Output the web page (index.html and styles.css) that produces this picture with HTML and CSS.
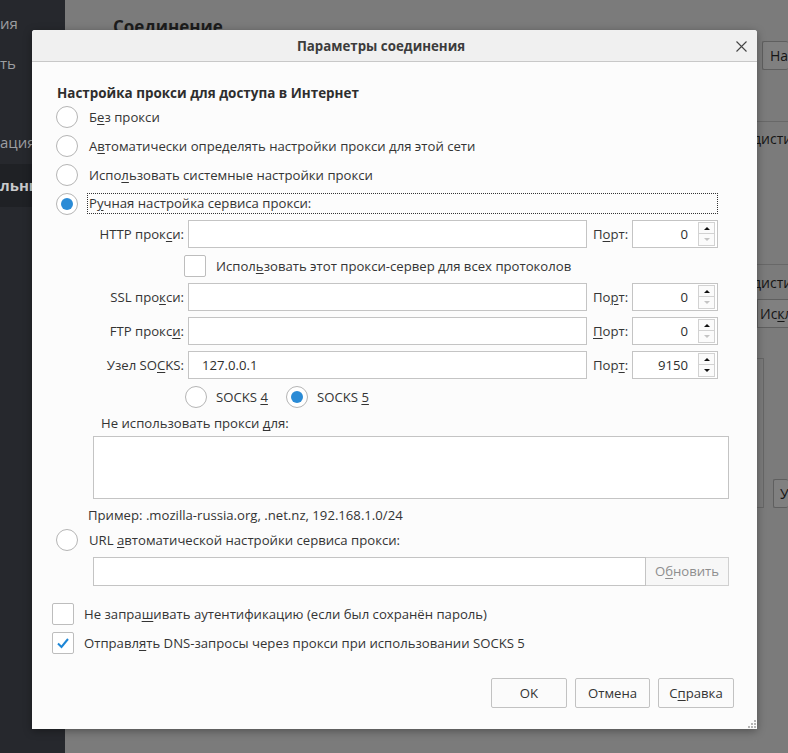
FILE: index.html
```html
<!DOCTYPE html>
<html lang="ru">
<head>
<meta charset="utf-8">
<title>Параметры соединения</title>
<link rel="stylesheet" href="styles.css">
</head>
<body>
<div class="page">
  <aside class="sidebar">
    <div class="nav n1">ия</div>
    <div class="nav n2">ть</div>
    <div class="nav n3">ация</div>
    <div class="nav n4 sel">льны</div>
  </aside>
  <main class="content">
    <h1 class="page-title">Соединение</h1>
    <div class="rightcol">
      <div class="bgbtn btn-na">На</div>
      <div class="bgline l1"></div>
      <div class="bgtext t1">дисти</div>
      <div class="bgline l2"></div>
      <div class="bgtext t2">дисти</div>
      <div class="bgbtn btn-iskl">Ис<u>к</u>л</div>
      <div class="bgbox"></div>
      <div class="bgbtn btn-small">У</div>
    </div>
  </main>
</div>

<div class="dialog">
  <div class="titlebar">
    <div class="title">Параметры соединения</div>
    <div class="close">
      <svg width="11" height="11" viewBox="0 0 11 11"><path d="M0.5 0.5 L10.5 10.5 M10.5 0.5 L0.5 10.5" stroke="#444" stroke-width="1.1" fill="none"/></svg>
    </div>
  </div>
  <div class="body">
    <div class="heading">Настройка прокси для доступа в Интернет</div>
    <div class="opt"><span class="radio"></span><span class="lbl">Б<u>е</u>з прокси</span></div>
    <div class="opt"><span class="radio"></span><span class="lbl">А<u>в</u>томатически определять настройки прокси для этой сети</span></div>
    <div class="opt"><span class="radio"></span><span class="lbl">Испо<u>л</u>ьзовать системные настройки прокси</span></div>
    <div class="opt"><span class="radio on"></span><span class="lbl focus">Р<u>у</u>чная настройка сервиса прокси:</span></div>

    <div class="manual">
      <div class="grid">
        <span class="flabel">HTTP прок<u>с</u>и:</span>
        <div class="field"></div>
        <span class="plabel">П<u>о</u>рт:</span>
        <div class="spin"><span class="sval">0</span><span class="sbtns"><span class="sb up"></span><span class="sb down dis"></span></span></div>

        <div class="allrow"><span class="check"></span><span class="clbl">Испол<u>ь</u>зовать этот прокси-сервер для всех протоколов</span></div>

        <span class="flabel">SSL про<u>к</u>си:</span>
        <div class="field"></div>
        <span class="plabel">По<u>р</u>т:</span>
        <div class="spin"><span class="sval">0</span><span class="sbtns"><span class="sb up"></span><span class="sb down dis"></span></span></div>

        <span class="flabel">FTP прокс<u>и</u>:</span>
        <div class="field"></div>
        <span class="plabel"><u>П</u>орт:</span>
        <div class="spin"><span class="sval">0</span><span class="sbtns"><span class="sb up"></span><span class="sb down dis"></span></span></div>

        <span class="flabel">Узел SO<u>C</u>KS:</span>
        <div class="field">127.0.0.1</div>
        <span class="plabel">Пор<u>т</u>:</span>
        <div class="spin"><span class="sval">9150</span><span class="sbtns"><span class="sb up"></span><span class="sb down"></span></span></div>

        <div class="socksrow">
          <span class="sitem"><span class="radio"></span><span class="slbl">SOCKS <u>4</u></span></span>
          <span class="sitem"><span class="radio on"></span><span class="slbl">SOCKS <u>5</u></span></span>
        </div>
      </div>
      <div class="noproxy-lbl">Не использовать прокси <u>д</u>ля:</div>
      <div class="textarea"></div>
    </div>
    <div class="example">Пример: .mozilla-russia.org, .net.nz, 192.168.1.0/24</div>
    <div class="opt urlopt"><span class="radio"></span><span class="lbl">URL <u>а</u>втоматической настройки сервиса прокси:</span></div>
    <div class="urlrow">
      <div class="urlfield"></div>
      <div class="reload">О<u>б</u>новить</div>
    </div>
    <div class="copt first"><span class="check"></span><span class="clbl">Не запра<u>ш</u>ивать аутентификацию (если был сохранён пароль)</span></div>
    <div class="copt"><span class="check on"><svg width="14" height="12" viewBox="0 0 14 12"><path d="M2 6.5 L5.5 10 L12 2" stroke="#1d86d6" stroke-width="2" fill="none"/></svg></span><span class="clbl">Отправл<u>я</u>ть DNS-запросы через прокси при использовании SOCKS 5</span></div>
    <div class="buttons">
      <div class="btn">OK</div>
      <div class="btn">Отмена</div>
      <div class="btn">С<u>п</u>равка</div>
    </div>
  </div>
  <div class="grip">
    <svg width="9" height="9" viewBox="0 0 9 9" fill="#b5b5b5"><rect x="7" y="1" width="2" height="2"/><rect x="4" y="4" width="2" height="2"/><rect x="7" y="4" width="2" height="2"/><rect x="1" y="7" width="2" height="2"/><rect x="4" y="7" width="2" height="2"/><rect x="7" y="7" width="2" height="2"/></svg>
  </div>
</div>
</body>
</html>
```

FILE: styles.css
```css
* { box-sizing: border-box; }
html, body { margin: 0; padding: 0; }
body {
  width: 788px;
  height: 753px;
  overflow: hidden;
  position: relative;
  font-family: "Open Sans", "Noto Sans", sans-serif;
  background: #7a7a7a;
}
u { text-decoration: underline; text-underline-offset: 2px; text-decoration-thickness: 1px; }

.page { display: flex; width: 788px; height: 753px; }

.sidebar {
  width: 65px;
  flex: none;
  background: #26282d;
  color: #9d9ea1;
  font-size: 15px;
  display: flex;
  flex-direction: column;
  overflow: hidden;
}
.nav { height: 40px; line-height: 40px; white-space: nowrap; padding-left: 0; }
.n1 { margin-top: 3px; }
.n2 { margin-top: 0; }
.n3 { margin-top: 39px; }
.n4 { margin-top: 2px; }
.sel { background: #1f2125; color: #c9cacc; font-weight: bold; height: 43px; line-height: 43px; }

.content {
  flex: 1;
  display: flex;
  background: #7b7b7b;
}
.page-title {
  margin: 15px 0 0 48px;
  font-size: 17px;
  font-weight: bold;
  color: #1c1c1c;
  line-height: 24px;
  height: 24px;
  font-family: "Open Sans", sans-serif;
}
.rightcol {
  margin-left: auto;
  width: 31px;
  display: flex;
  flex-direction: column;
  font-size: 13px;
  color: #151515;
}
.bgbtn {
  border: 1px solid #5f5f5f;
  border-radius: 2px;
  background: #808080;
  white-space: nowrap;
  overflow: hidden;
  line-height: 27px;
  font-size: 14px;
}
.btn-na { margin-top: 41px; margin-left: 5px; height: 29px; padding-left: 7px; border-right: none; }
.bgline { height: 1px; background: #686868; }
.l1 { margin-top: 51px; }
.bgtext { white-space: nowrap; overflow: hidden; height: 17px; line-height: 17px; font-size: 14px; }
.t1 { margin-top: 8px; margin-left: -4px; }
.l2 { margin-top: 117px; }
.t2 { margin-top: 9px; margin-left: -4px; }
.btn-iskl { margin-top: 8px; height: 29px; padding-left: 2px; border-right: none; border-radius: 0; }
.bgbox { margin-top: 30px; margin-left: -10px; width: 17px; height: 150px; border: 1px solid #666; border-left: none; }
.btn-small { margin-top: -29px; margin-left: 16px; height: 29px; padding-left: 6px; border-right: none; }

.dialog {
  position: absolute;
  left: 32px;
  top: 30px;
  width: 725px;
  height: 699px;
  background: #fcfcfc;
  box-shadow: 0 2px 9px rgba(0,0,0,0.35);
  border-radius: 3px 3px 0 0;
  display: flex;
  flex-direction: column;
  font-size: 13.15px;
  color: #343434;
}
.titlebar {
  height: 32px;
  flex: none;
  background: #f0f0f0;
  border-bottom: 1px solid #c8c8c8;
  border-radius: 3px 3px 0 0;
  display: flex;
  align-items: center;
}
.title {
  flex: 1;
  text-align: center;
  font-weight: bold;
  font-size: 13.3px;
  color: #3c3c3c;
  padding-top: 1px;
}
.close { width: 27px; display: flex; align-items: center; justify-content: center; padding-right: 4px; padding-top: 1px; }

.body { padding: 0 24px; display: flex; flex-direction: column; }
.heading {
  margin-top: 22px;
  height: 18px;
  line-height: 18px;
  font-weight: bold;
  font-size: 13.45px;
  color: #2e2e2e;
  padding-left: 1px;
  white-space: nowrap;
}
.opt { display: flex; align-items: center; height: 29px; }
.radio {
  width: 22px;
  height: 22px;
  flex: none;
  border: 1px solid #b5b5b5;
  border-radius: 50%;
  background: #fff;
  display: inline-flex;
  align-items: center;
  justify-content: center;
}
.radio.on::after {
  content: "";
  width: 12px;
  height: 12px;
  border-radius: 50%;
  background: #2a8bd6;
}
.lbl { margin-left: 11px; line-height: 18px; white-space: nowrap; }
.lbl.focus {
  margin-left: 9px;
  padding-left: 1px;
  width: 631px;
  height: 21px;
  line-height: 19px;
  border: 1px dotted #333;
}

.manual { margin-left: 37px; margin-top: 2px; display: flex; flex-direction: column; }
.grid {
  display: grid;
  grid-template-columns: 95px 399px 45px 86px;
  grid-auto-rows: auto;
  row-gap: 6px;
  align-items: center;
}
.flabel { text-align: right; padding-right: 4px; white-space: nowrap; }
.plabel { padding-left: 6px; white-space: nowrap; }
.field {
  height: 28px;
  border: 1px solid #c4c4c4;
  background: #fff;
  line-height: 26px;
  padding-left: 13px;
  color: #2e2e2e;
}
.spin {
  height: 28px;
  border: 1px solid #c4c4c4;
  background: #fff;
  display: flex;
  align-items: center;
}
.sval { flex: 1; text-align: right; padding-right: 10px; color: #2e2e2e; }
.sbtns { width: 17px; margin-right: 2px; display: flex; flex-direction: column; }
.sb {
  height: 12px;
  border: 1px solid #d2d2d2;
  background: #fbfbfb;
  display: flex;
  align-items: center;
  justify-content: center;
}
.sb.down { border-top: none; }
.sb.up::after {
  content: "";
  border-left: 3px solid transparent;
  border-right: 3px solid transparent;
  border-bottom: 3px solid #111;
}
.sb.down::after {
  content: "";
  border-left: 3px solid transparent;
  border-right: 3px solid transparent;
  border-top: 3px solid #111;
}
.sb.down.dis::after { border-top-color: #c4c4c4; }

.allrow { grid-column: 2 / span 3; display: flex; align-items: center; height: 23px; margin-left: -4px; }
.check {
  width: 22px;
  height: 22px;
  flex: none;
  border: 1px solid #bdbdbd;
  border-radius: 2px;
  background: #fff;
  display: inline-flex;
  align-items: center;
  justify-content: center;
}
.clbl { margin-left: 10px; white-space: nowrap; }
.socksrow { grid-column: 2 / span 3; display: flex; align-items: center; height: 23px; margin-left: -3px; }
.sitem { display: flex; align-items: center; width: 101px; }
.slbl { margin-left: 9px; white-space: nowrap; }

.noproxy-lbl { margin-top: 6px; padding-left: 8px; line-height: 18px; height: 18px; }
.textarea { margin-top: 4px; width: 636px; height: 63px; border: 1px solid #c4c4c4; background: #fff; }
.example { margin-top: 7px; margin-left: 32px; line-height: 18px; height: 18px; white-space: nowrap; }
.urlopt { margin-top: 3px; height: 26px; }
.urlrow { display: flex; margin-top: 4px; margin-left: 37px; height: 29px; }
.urlfield { width: 553px; height: 29px; border: 1px solid #c4c4c4; background: #fff; }
.reload {
  width: 83px;
  height: 29px;
  border: 1px solid #d0d0d0;
  border-left: none;
  background: #f7f7f7;
  color: #8e8e8e;
  text-align: center;
  line-height: 27px;
}
.copt { display: flex; align-items: center; height: 29px; margin-left: -4px; }
.copt.first { margin-top: 13px; }
.buttons { display: flex; justify-content: flex-end; gap: 8px; margin-top: 21px; margin-right: -1px; }
.btn {
  width: 76px;
  height: 30px;
  border: 1px solid #c2c2c2;
  border-radius: 2px;
  background: #fbfbfb;
  text-align: center;
  line-height: 28px;
  color: #333;
}
.btn:nth-child(2) { width: 75px; }
.grip { position: absolute; right: 1px; bottom: 1px; width: 9px; height: 9px; line-height: 0; }
```
